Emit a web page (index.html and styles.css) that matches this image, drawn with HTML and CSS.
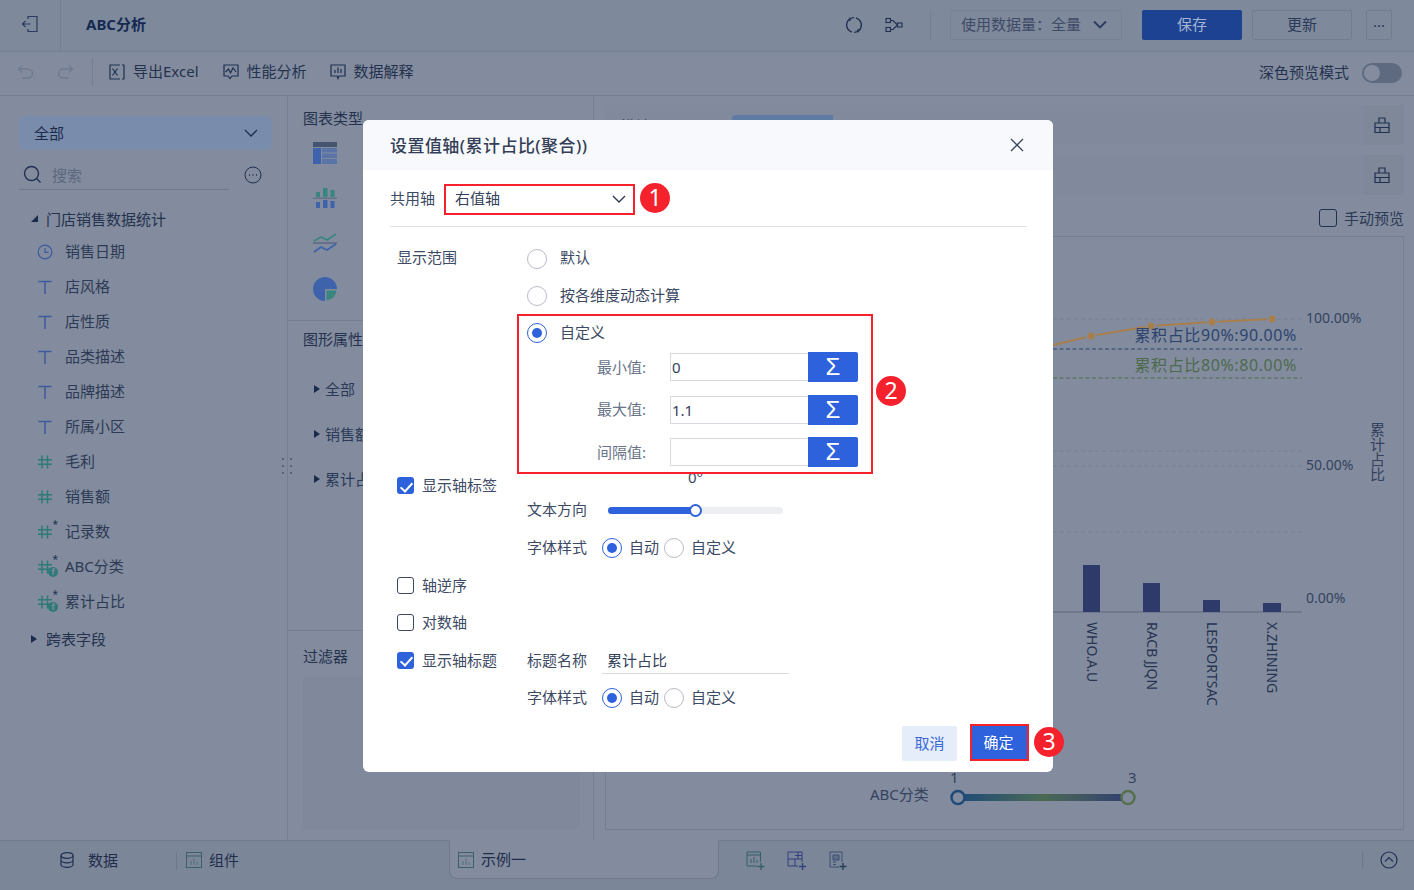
FILE: index.html
```html
<!DOCTYPE html>
<html lang="zh-CN">
<head>
<meta charset="utf-8">
<title>ABC分析</title>
<link rel="stylesheet" href="styles.css">
</head>
<body>
<svg class="sprites" width="0" height="0" aria-hidden="true">
  <symbol id="i-text" viewBox="0 0 16 16"><path d="M1.500 2.500h13M8 2.500V15" fill="none" stroke="#3d5a9e" stroke-width="1.500"/></symbol>
  <symbol id="i-num" viewBox="0 0 16 16"><path d="M5 1.500v13M10.500 1.500v13M1 5.800h14M1 10.200h14" fill="none" stroke="#2f7a78" stroke-width="1.500"/></symbol>
  <symbol id="i-lock" viewBox="0 0 16 16"><path d="M1 15.500V6h14v9.500zM5 6V1h6v5M1 10.500h14M6 10.500v5" fill="none" stroke="#1f3050" stroke-width="1.200"/></symbol>
  <symbol id="i-sheet" viewBox="0 0 16 16"><g fill="none" stroke="#3c5f6a"><rect x=".5" y=".5" width="15" height="15"/><path d="M1 4h14"/><path d="M5 13V9M8 13V6.500M11 13v-3" stroke="#4d6f7d"/></g></symbol>
</svg>
<div class="app">
  <header class="topbar">
    <div class="back">
      <svg width="18" height="18" viewBox="0 0 18 18" fill="none" stroke="#2a3b5e" stroke-width="1.2"><path d="M7 4V1.500h9v15H7V14M1.500 9h8M4.500 6l-3 3 3 3"/></svg>
    </div>
    <div class="doc-title">ABC分析</div>
    <div class="top-actions">
      <svg class="ico-refresh" width="18" height="18" viewBox="0 0 18 18" fill="none" stroke="#1f3050" stroke-width="1.400"><circle cx="9" cy="9" r="7.400" stroke-dasharray="21 2.250" transform="rotate(-75 9 9)"/><path d="M4.200 1.800l1.900 1.800-2.400 1.300M13.800 16.200l-1.900-1.800 2.400-1.300" stroke-width="1"/></svg>
      <svg class="ico-flow" width="18" height="16" viewBox="0 0 18 16" fill="none" stroke="#1f3050" stroke-width="1.100"><rect x="1" y="1.500" width="4.500" height="4"/><rect x="1" y="10.500" width="4.500" height="4"/><rect x="12.500" y="6" width="4.500" height="4"/><path d="M5.500 3.500h2.500L12.500 8 8 12.500H5.500"/></svg>
      <span class="vsep"></span>
      <div class="data-select"><span>使用数据量：全量</span>
        <svg width="16" height="10" viewBox="0 0 16 10" fill="none" stroke="#2a3b5e" stroke-width="1.800"><path d="M2 1.500l6 6 6-6"/></svg>
      </div>
      <button class="btn-save">保存</button>
      <button class="btn-update">更新</button>
      <button class="btn-more">···</button>
    </div>
  </header>

  <div class="toolbar">
    <svg class="undo" width="18" height="16" viewBox="0 0 18 16" fill="none" stroke="#6f7b91" stroke-width="1.400"><path d="M5 1.500L1.500 5 5 8.500M1.500 5H11a4.500 4.500 0 0 1 0 9H5"/></svg>
    <svg class="redo" width="18" height="16" viewBox="0 0 18 16" fill="none" stroke="#6f7b91" stroke-width="1.400"><path d="M13 1.500L16.500 5 13 8.500M16.500 5H7a4.500 4.500 0 0 0 0 9h6"/></svg>
    <span class="vsep tool-sep"></span>
    <div class="tool">
      <svg width="16" height="16" viewBox="0 0 16 16" fill="none" stroke="#1f3050" stroke-width="1.200"><path d="M11 1H1v14h10M13 1h2v14h-2"/><path d="M3.500 4.500l5 7M8.500 4.500l-5 7"/></svg>
      <span>导出Excel</span>
    </div>
    <div class="tool">
      <svg width="16" height="16" viewBox="0 0 16 16" fill="none" stroke="#1f3050" stroke-width="1.200"><path d="M1 1h14v11H9l-2 2.500L5 12H1z"/><path d="M2.500 8l3-3 2 4 2.500-5 3 4"/></svg>
      <span>性能分析</span>
    </div>
    <div class="tool">
      <svg width="16" height="16" viewBox="0 0 16 16" fill="none" stroke="#1f3050" stroke-width="1.200"><path d="M1 1h14v11H9l-1 2.500L7 12H1z"/><path d="M5 6v3M8 3.500V9M11 5v4"/></svg>
      <span>数据解释</span>
    </div>
    <div class="dark-mode"><span>深色预览模式</span><span class="switch"><i></i></span></div>
  </div>

  <main class="workspace">
    <aside class="fields">
      <div class="scope"><span>全部</span>
        <svg width="14" height="8" viewBox="0 0 14 8" fill="none" stroke="#1f3050" stroke-width="1.300"><path d="M1 1l6 6 6-6"/></svg>
      </div>
      <div class="search-row">
        <div class="search">
          <svg width="19" height="19" viewBox="0 0 19 19" fill="none" stroke="#1f3050" stroke-width="1.400"><circle cx="8.500" cy="8.500" r="7"/><path d="M13.500 13.500l4 4"/></svg>
          <span>搜索</span>
        </div>
        <svg class="more-ico" width="18" height="18" viewBox="0 0 18 18" fill="none" stroke="#1f3050" stroke-width="1"><circle cx="9" cy="9" r="8"/><path d="M5 9h1M8.500 9h1M12 9h1" stroke-width="1.400"/></svg>
      </div>
      <div class="tree-head"><i class="tri-open"></i><span>门店销售数据统计</span></div>
      <ul class="field-list">
        <li><span class="f-ico"><svg width="16" height="16" viewBox="0 0 16 16" fill="none" stroke="#3d5a9e" stroke-width="1.200"><circle cx="8" cy="8" r="6.800"/><path d="M8 4v4.300h3.500"/></svg></span><span>销售日期</span></li>
        <li><span class="f-ico"><svg width="16" height="16"><use href="#i-text"/></svg></span><span>店风格</span></li>
        <li><span class="f-ico"><svg width="16" height="16"><use href="#i-text"/></svg></span><span>店性质</span></li>
        <li><span class="f-ico"><svg width="16" height="16"><use href="#i-text"/></svg></span><span>品类描述</span></li>
        <li><span class="f-ico"><svg width="16" height="16"><use href="#i-text"/></svg></span><span>品牌描述</span></li>
        <li><span class="f-ico"><svg width="16" height="16"><use href="#i-text"/></svg></span><span>所属小区</span></li>
        <li><span class="f-ico"><svg width="16" height="16"><use href="#i-num"/></svg></span><span>毛利</span></li>
        <li><span class="f-ico"><svg width="16" height="16"><use href="#i-num"/></svg></span><span>销售额</span></li>
        <li><span class="f-ico"><svg width="16" height="16"><use href="#i-num"/></svg><sup>*</sup></span><span>记录数</span></li>
        <li><span class="f-ico"><svg width="16" height="16"><use href="#i-num"/></svg><sup>*</sup><b>f</b></span><span>ABC分类</span></li>
        <li><span class="f-ico"><svg width="16" height="16"><use href="#i-num"/></svg><sup>*</sup><b>f</b></span><span>累计占比</span></li>
      </ul>
      <div class="tree-head"><i class="tri-closed"></i><span>跨表字段</span></div>
    </aside>

    <section class="props">
      <div class="chart-types">
        <h3>图表类型</h3>
        <div class="type-icons">
          <svg width="24" height="22" viewBox="0 0 24 22"><rect width="24" height="5" fill="#46556f"/><rect y="6" width="8" height="16" fill="#3f62ad"/><path d="M9 6h15v4.500H9zM9 11.500h15V16H9zM9 17h15v5H9z" fill="#5a74a8"/></svg>
          <svg width="24" height="22" viewBox="0 0 24 22"><path d="M3 5h4v5H3zM10 1h4.500v9H10zM17.500 3h4v7h-4z" fill="#39857f"/><rect y="10.500" width="24" height="1.500" fill="#64718a"/><path d="M3 15h4v6H3zM10 13h4.500v8H10zM17.500 14h4v7h-4z" fill="#3f62ad"/></svg>
          <svg width="24" height="22" viewBox="0 0 24 22" fill="none" stroke-width="1.800"><path d="M1 9l7-4 6 3 9-6" stroke="#39857f"/><rect y="10" width="24" height="2" fill="#64718a" stroke="none"/><path d="M1 20l7-5 6 3 9-6" stroke="#3f62ad"/></svg>
          <svg width="24" height="24" viewBox="0 0 24 24"><path d="M24 12A12 12 0 1 0 12 24V12z" fill="#3f62ad"/><path d="M13.500 13.500H23.500A11 11 0 0 1 13.500 23.500z" fill="#39857f"/></svg>
        </div>
      </div>
      <div class="graph-attrs">
        <h3>图形属性</h3>
        <div class="acc"><i class="tri-closed"></i>全部</div>
        <div class="acc"><i class="tri-closed"></i>销售额</div>
        <div class="acc"><i class="tri-closed"></i>累计占比</div>
        <span class="grip"><i></i><i></i><i></i><i></i><i></i><i></i></span>
      </div>
      <div class="filter">
        <h3>过滤器</h3>
        <div class="filter-box"></div>
      </div>
    </section>

    <section class="canvas">
      <div class="shelf">
        <span class="shelf-name">横轴</span>
        <span class="shelf-pill">累计占比</span>
        <span class="shelf-side"><svg width="16" height="16"><use href="#i-lock"/></svg></span>
      </div>
      <div class="shelf">
        <span class="shelf-side"><svg width="16" height="16"><use href="#i-lock"/></svg></span>
      </div>
      <div class="preview-row"><span class="check-box dark"></span><span>手动预览</span></div>
      <div class="chart-frame">
        <svg class="chart" viewBox="606 237 797 592" width="797" height="592">
          <defs>
            <linearGradient id="legend-grad"><stop offset="0" stop-color="#1f4a78"/><stop offset=".5" stop-color="#4a6a55"/><stop offset="1" stop-color="#333f70"/></linearGradient>
          </defs>
          <g stroke="#748096" stroke-dasharray="4 3" fill="none">
            <path d="M1053 319H1302M1053 451H1302M1053 466H1302M1053 532H1302"/>
          </g>
          <path d="M1053 345L1091 336L1151 326L1212 322L1272 319" fill="none" stroke="#a87f4c" stroke-width="2"/>
          <g fill="#a87f4c" stroke="#828c9e" stroke-width="2"><circle cx="1091" cy="336" r="4.500"/><circle cx="1151" cy="326" r="4.500"/><circle cx="1212" cy="322" r="4.500"/><circle cx="1272" cy="319" r="4.500"/></g>
          <path d="M1053 349H1302" stroke="#2d4470" stroke-dasharray="4 2.500" stroke-width="1.200"/>
          <path d="M1053 378H1302" stroke="#4e6a4e" stroke-dasharray="4 2.500" stroke-width="1.200"/>
          <text class="mark-line navy" x="1297" y="341" text-anchor="end">累积占比90%:90.00%</text>
          <text class="mark-line green" x="1297" y="371" text-anchor="end">累积占比80%:80.00%</text>
          <text class="axis-val" x="1306" y="323">100.00%</text>
          <text class="axis-val" x="1306" y="470">50.00%</text>
          <text class="axis-val" x="1306" y="603">0.00%</text>
          <path d="M1053 612H1302" stroke="#69748a" stroke-width="1.500"/>
          <g fill="#2e3a6a"><rect x="1083" y="565" width="17" height="47"/><rect x="1143" y="583" width="17" height="29"/><rect x="1203" y="600" width="17" height="12"/><rect x="1263" y="603" width="18" height="9"/></g>
          <g class="cat">
            <text transform="translate(1087 622) rotate(90)">WHO.A.U</text>
            <text transform="translate(1147 622) rotate(90)">RACB JJQN</text>
            <text transform="translate(1207 622) rotate(90)">LESPORTSAC</text>
            <text transform="translate(1267 622) rotate(90)">X.ZHINING</text>
          </g>
          <text class="axis-title" x="1377" y="422">累计占比</text>
          <text class="legend" x="870" y="800">ABC分类</text>
          <text class="legend" x="950" y="783">1</text>
          <text class="legend" x="1128" y="783">3</text>
          <rect x="958" y="794" width="170" height="7" fill="url(#legend-grad)"/>
          <circle cx="958" cy="797.500" r="6.500" fill="#818b9d" stroke="#1f4a78" stroke-width="2.500"/>
          <circle cx="1128" cy="797.500" r="6.500" fill="#818b9d" stroke="#56704f" stroke-width="2.500"/>
        </svg>
      </div>
    </section>
  </main>

  <footer class="bottombar">
    <div class="tab-data">
      <svg width="14" height="16" viewBox="0 0 14 16" fill="none" stroke="#1f3050" stroke-width="1.200"><ellipse cx="7" cy="3.500" rx="6" ry="2.800"/><path d="M1 3.500v9c0 1.500 2.700 2.800 6 2.800s6-1.300 6-2.800v-9M1 8c0 1.500 2.700 2.800 6 2.800S13 9.500 13 8"/></svg>
      <span>数据</span>
    </div>
    <span class="vsep foot-sep"></span>
    <div class="tab-comp">
      <svg width="16" height="16"><use href="#i-sheet"/></svg>
      <span>组件</span>
    </div>
    <div class="tab-sheet">
      <svg width="16" height="16"><use href="#i-sheet"/></svg>
      <span>示例一</span>
    </div>
    <div class="add-icons">
      <svg width="20" height="20" viewBox="0 0 20 20" fill="none" stroke="#33606a" stroke-width="1"><path d="M14.500 11V1H1v14h10"/><path d="M1 4h13.500M5 12V8M8 12V6M11 12V9"/><path d="M15 12v7M11.500 15.500h7" stroke-width="1.400"/></svg>
      <svg width="20" height="20" viewBox="0 0 20 20" fill="none" stroke="#333f80" stroke-width="1"><path d="M15 11V1H1v14h10M1 8h14M8 8v7M8 4.500h7M11 1v7"/><path d="M15.500 12v7M12 15.500h7" stroke-width="1.400"/></svg>
      <svg width="20" height="20" viewBox="0 0 20 20" fill="none" stroke="#3c4f70" stroke-width="1"><path d="M14 11V1H2v15h9"/><path d="M5 4h6v5H5z" fill="#5e6d88"/><path d="M5 11h3M5 13.500h3"/><path d="M15 12v7M11.500 15.500h7" stroke="#26405a" stroke-width="1.400"/></svg>
    </div>
    <div class="foot-end">
      <span class="vsep"></span>
      <svg width="18" height="18" viewBox="0 0 18 18" fill="none" stroke="#1f3050" stroke-width="1.200"><circle cx="9" cy="9" r="8"/><path d="M5 10.500L9 6.500l4 4"/></svg>
    </div>
  </footer>
</div>

<div class="dialog">
  <div class="dialog-head">
    <span>设置值轴(累计占比(聚合))</span>
    <svg width="14" height="14" viewBox="0 0 14 14" fill="none" stroke="#3a4660" stroke-width="1.300"><path d="M1 1l12 12M13 1L1 13"/></svg>
  </div>
  <div class="dialog-body">
    <div class="share-row">
      <label>共用轴</label>
      <div class="share-select"><span>右值轴</span>
        <svg width="14" height="8" viewBox="0 0 14 8" fill="none" stroke="#2a3652" stroke-width="1.300"><path d="M1 1l6 6 6-6"/></svg>
      </div>
    </div>
    <div class="form-grid">
      <div class="col-label range-label">显示范围</div>
      <div class="col-main">
        <div class="radio-row first"><span class="radio"></span><span>默认</span></div>
        <div class="radio-row"><span class="radio"></span><span>按各维度动态计算</span></div>
        <div class="radio-row"><span class="radio on"></span><span>自定义</span></div>
        <div class="num-rows">
          <div class="num-row"><label>最小值:</label><span class="num-input">0</span><span class="sigma">Σ</span></div>
          <div class="num-row"><label>最大值:</label><span class="num-input">1.1</span><span class="sigma">Σ</span></div>
          <div class="num-row"><label>间隔值:</label><span class="num-input"></span><span class="sigma">Σ</span></div>
        </div>
      </div>

      <div class="col-label check-top"><span class="check-box on"></span><span>显示轴标签</span></div>
      <div class="col-main">
        <div class="angle">0°</div>
        <div class="sub-row"><label>文本方向</label><span class="slider"><i class="fill"></i><i class="knob"></i></span></div>
        <div class="sub-row"><label>字体样式</label>
          <span class="mini-radio"><span class="radio on"></span><span>自动</span></span>
          <span class="mini-radio"><span class="radio"></span><span>自定义</span></span>
        </div>
      </div>

      <div class="col-label check-row"><span class="check-box"></span><span>轴逆序</span></div>
      <div class="col-main"></div>
      <div class="col-label check-row"><span class="check-box"></span><span>对数轴</span></div>
      <div class="col-main"></div>

      <div class="col-label check-title"><span class="check-box on"></span><span>显示轴标题</span></div>
      <div class="col-main">
        <div class="sub-row title-row"><label>标题名称</label><span class="title-input">累计占比</span></div>
        <div class="sub-row"><label>字体样式</label>
          <span class="mini-radio"><span class="radio on"></span><span>自动</span></span>
          <span class="mini-radio"><span class="radio"></span><span>自定义</span></span>
        </div>
      </div>
    </div>
    <div class="dialog-foot">
      <button class="btn-cancel">取消</button>
      <button class="btn-ok">确定</button>
    </div>
  </div>
  <span class="callout-box box-one"></span>
  <span class="callout-box box-two"></span>
  <span class="badge badge-one">1</span>
  <span class="badge badge-two">2</span>
  <span class="badge badge-three">3</span>
</div>
</body>
</html>
```

FILE: styles.css
```css
* { box-sizing: border-box; }
html, body { margin: 0; height: 100%; }
body {
  font-family: "Noto Sans", "Noto Sans CJK SC", sans-serif;
  font-size: 15px;
  color: #2b3a58;
  background: #828c9e;
  overflow: hidden;
}
button { font: inherit; cursor: pointer; }
h3 { margin: 0; font-size: 15px; font-weight: 400; color: #25324e; }
ul { list-style: none; margin: 0; padding: 0; }
.sprites { position: absolute; }
.app { width: 1414px; height: 890px; display: flex; flex-direction: column; }

/* top bar */
.topbar { height: 52px; flex: none; display: flex; align-items: center; padding-bottom: 2px; background: #7f899c; border-bottom: 1px solid #747f92; }
.back { width: 61px; height: 51px; margin-top: 2px; display: flex; align-items: center; justify-content: center; padding-bottom: 3px; border-right: 1px solid #747f92; }
.doc-title { margin-left: 25px; padding-bottom: 2px; font-weight: 700; color: #152a52; }
.top-actions { margin-left: auto; display: flex; align-items: center; height: 100%; }
.ico-flow { margin-left: 22px; }
.top-actions .vsep { margin: 0 19px 0 27px; height: 30px; }
.vsep { display: inline-block; width: 1px; background: #747f92; }
.data-select { width: 172px; height: 30px; border: 1px solid #778296; display: flex; align-items: center; justify-content: space-between; padding: 0 13px 0 10px; color: #3e4b66; }
.data-select span { padding-bottom: 2px; }
.btn-save { margin-left: 20px; width: 100px; height: 30px; padding: 0 0 2px; border: 0; border-radius: 2px; background: #1c4291; color: #a5b4d2; }
.btn-update { margin-left: 10px; width: 100px; height: 30px; padding: 0 0 2px; border: 1px solid #727d91; border-radius: 2px; background: transparent; color: #2b3a58; }
.btn-more { margin: 0 22px 0 14px; width: 26px; height: 30px; padding: 0; border: 1px solid #727d91; border-radius: 2px; background: transparent; color: #2b3a58; }

/* tool bar */
.toolbar { height: 44px; flex: none; display: flex; align-items: center; padding: 0 0 4px 17px; background: #828c9e; border-bottom: 1px solid #767f92; color: #25324e; }
.redo { margin-left: 21px; }
.tool-sep { height: 28px; margin: 0 16px 0 18px; }
.tool { display: flex; align-items: center; gap: 8px; margin-right: 24px; }
.tool + .tool { margin-right: 23px; }
.tool span, .dark-mode > span:first-child { padding-bottom: 2px; }
.dark-mode { margin: 2px 12px 0 auto; display: flex; align-items: center; gap: 13px; }
.switch { width: 40px; height: 20px; border-radius: 10px; background: #5e6a80; padding: 2px; display: block; }
.switch i { display: block; width: 16px; height: 16px; border-radius: 50%; background: #838d9f; }

/* main */
.workspace { flex: 1; display: flex; min-height: 0; }
.fields { width: 288px; flex: none; padding: 20px 15px 0 19px; border-right: 1px solid #757f92; }
.scope { width: 253px; height: 34px; border-radius: 6px; background: #7a8cab; display: flex; align-items: center; justify-content: space-between; padding: 0 14px 0 15px; color: #1c2b49; }
.scope span { padding-bottom: 2px; }
.search-row { display: flex; align-items: center; margin-top: 10px; }
.search { width: 210px; height: 30px; display: flex; align-items: center; gap: 10px; padding-left: 4px; border-bottom: 1px solid #6e7a90; color: #5c687f; }
.more-ico { margin-left: 15px; }
.tree-head { margin-top: 12px; height: 33px; display: flex; align-items: center; padding-left: 12px; color: #25324e; }
.field-list { margin-top: -1px; }
.field-list + .tree-head { margin-top: 2px; height: 35px; }
.tri-open { width: 0; height: 0; margin-right: 8px; border-style: solid; border-width: 0 0 7px 7px; border-color: transparent transparent #1a2a4d transparent; }
.tri-closed { width: 0; height: 0; margin-right: 5px; flex: none; border-style: solid; border-width: 4.500px 0 4.500px 6px; border-color: transparent transparent transparent #1a2a4d; }
.tree-head .tri-closed { margin-right: 9px; }
.field-list li { height: 35px; display: flex; align-items: center; padding-left: 18px; color: #2d3a55; }
.field-list li > span:last-child { padding-bottom: 2px; }
.f-ico { position: relative; width: 16px; height: 16px; margin-right: 12px; flex: none; }
.f-ico svg { display: block; }
.f-ico sup { position: absolute; right: -5px; top: -5px; font-size: 10px; line-height: 10px; color: #1d3050; }
.f-ico b { position: absolute; right: -5px; bottom: -2px; width: 10px; height: 10px; border-radius: 50%; background: #2f7a78; color: #828c9e; font-size: 8px; line-height: 10px; text-align: center; }

/* properties */
.props { width: 306px; flex: none; display: flex; flex-direction: column; border-right: 1px solid #757f92; }
.chart-types { height: 225px; padding: 11px 15px 0; border-bottom: 1px solid #757f92; }
.type-icons { display: flex; flex-direction: column; align-items: flex-start; gap: 23px; margin: 14px 0 0 10px; }
.graph-attrs { position: relative; height: 310px; padding: 6px 15px 0; border-bottom: 1px solid #757f92; }
.acc { height: 45px; display: flex; align-items: center; padding-left: 11px; white-space: nowrap; }
.graph-attrs h3 { height: 25px; margin-bottom: 14px; line-height: 25px; }
.grip { position: absolute; left: -6px; top: 137px; width: 12px; display: grid; grid-template-columns: 2px 2px; gap: 5px 6px; }
.grip i { width: 2px; height: 2px; background: #566379; }
.filter { flex: 1; padding: 14px 15px 0; }
.filter-box { margin-top: 11px; width: 277px; height: 152px; background: #7f899b; }

/* canvas */
.canvas { flex: 1; min-width: 0; padding: 9px 10px 0 11px; }
.shelf { height: 40px; margin-bottom: 10px; display: flex; align-items: center; background: #808a9c; }
.shelf-name { margin-left: 15px; color: #25324e; }
.shelf-pill { margin-left: 82px; width: 101px; height: 32px; margin-top: 12px; border-radius: 4px 0 0 4px; background: #5f7aa3; text-align: center; line-height: 30px; }
.shelf-side { margin-left: auto; width: 40px; height: 100%; padding-right: 4px; display: flex; align-items: center; justify-content: center; background: #7e8899; }
.shelf-side svg { display: block; }
.preview-row { height: 31px; padding: 0 0 6px; display: flex; align-items: center; justify-content: flex-end; gap: 7px; color: #2d3a55; }
.preview-row span:last-child { padding-bottom: 1px; }
.chart-frame { border: 1px solid #757f92; height: 594px; }
.chart { display: block; }
.mark-line { font-size: 16px; letter-spacing: .6px; }
.navy { fill: #2d4470; }
.green { fill: #4e6a4e; }
.axis-val { font-size: 14px; fill: #35425e; }
.cat text { font-size: 14px; fill: #273552; }
.axis-title { font-size: 15px; fill: #35425e; writing-mode: vertical-rl; text-orientation: upright; }
.legend { font-size: 15px; fill: #35425e; }

/* bottom bar */
.bottombar { height: 50px; flex: none; display: flex; align-items: flex-start; background: #7c8699; border-top: 1px solid #707b8f; }
.tab-data { display: flex; align-items: center; gap: 14px; height: 38px; margin-left: 60px; color: #1f2d4b; }
.tab-data span, .tab-comp span, .tab-sheet span { padding-bottom: 2px; }
.foot-sep { height: 18px; margin: 11px 9px 0 58px; background: #6d788c; }
.tab-comp { display: flex; align-items: center; gap: 7px; height: 38px; color: #1f2d4b; }
.tab-sheet { margin: -1px 0 0 210px; width: 270px; height: 39px; display: flex; align-items: center; gap: 7px; padding-left: 8px; background: #828c9e; border: 1px solid #707b8f; border-top-color: #828c9e; border-radius: 0 0 8px 8px; color: #1f2d4b; }
.add-icons { display: flex; align-items: center; gap: 21px; height: 40px; margin-left: 27px; }
.foot-end { margin-left: auto; margin-right: 16px; display: flex; align-items: center; gap: 17px; height: 38px; }
.foot-end .vsep { height: 18px; background: #6d788c; }

/* dialog */
.dialog { position: absolute; left: 363px; top: 120px; width: 690px; height: 652px; background: #fff; border-radius: 6px; color: #3d4a65; }
.dialog-head { height: 50px; display: flex; align-items: center; justify-content: space-between; padding: 0 29px 0 27px; background: #f8f9fc; border-radius: 6px 6px 0 0; font-size: 17px; font-weight: 500; letter-spacing: .45px; color: #343f57; }
.dialog-head span { padding-bottom: 2px; }
.dialog-body { padding: 14px 26px 0 27px; }
.share-row { height: 43px; display: flex; align-items: flex-start; border-bottom: 1px solid #dfe2e8; }
.share-row label { width: 54px; line-height: 29px; }
.share-select { width: 191px; height: 30px; display: flex; align-items: center; justify-content: space-between; padding: 0 9px 0 11px; color: #35415c; }
.share-select span { padding-bottom: 4px; }
.form-grid { display: grid; grid-template-columns: 130px 500px; margin-top: 13px; padding-left: 7px; }
.col-main { min-height: 0; }
.range-label { line-height: 35px; }
.radio-row { height: 37px; display: flex; align-items: center; gap: 13px; }
.radio-row span:last-child, .col-label span:last-child, .num-row label, .title-row label { padding-bottom: 2px; }
.radio-row.first span:last-child, .mini-radio span:last-child, .sub-row label { padding-bottom: 4px; }
.title-row label { padding-bottom: 2px; }
.radio { display: inline-block; flex: none; position: relative; width: 20px; height: 20px; border: 1px solid #b6bbc5; border-radius: 50%; background: #fff; padding: 0; }
.mini-radio .radio { padding: 0; }
.radio.on { border-color: #2d62dc; }
.radio.on::after { content: ""; position: absolute; left: 4px; top: 4px; width: 10px; height: 10px; border-radius: 50%; background: #2d62dc; }
.num-rows { display: flex; flex-direction: column; gap: 10.500px; }
.num-row { height: 32px; display: flex; align-items: center; padding-left: 70px; }
.num-row label { width: 73px; color: #6a7488; }
.num-input { width: 138px; height: 28px; padding-left: 1px; border: 1px solid #d8dbe1; border-right: 0; line-height: 27px; color: #35415c; }
.sigma { width: 50px; height: 30px; background: #2d62dc; border-radius: 0 2px 2px 0; color: #fff; font-family: "Liberation Sans", sans-serif; font-size: 24px; line-height: 29px; text-align: center; }
.col-label.check-top, .col-label.check-row, .col-label.check-title { display: flex; align-items: center; gap: 8px; }
.check-top { height: 35px; }
.check-row { height: 37px; }
.check-title { height: 38px; }
.check-box { display: inline-block; flex: none; position: relative; width: 17px; height: 17px; border: 1px solid #3a4660; border-radius: 3px; background: transparent; padding: 0; }
.check-box.dark { width: 18px; height: 18px; border-color: #1f3050; }
.check-box.on { border: 0; background: #2d62dc; }
.check-box.on::after { content: ""; position: absolute; left: 6px; top: 2.500px; width: 5px; height: 10px; border: solid #fff; border-width: 0 2px 2px 0; transform: rotate(42deg); }
.angle { height: 23px; padding-left: 161px; line-height: 18px; color: #3d4a65; }
.sub-row { height: 38px; display: flex; align-items: center; }
.sub-row label { width: 75px; flex: none; }
.slider { position: relative; width: 175px; height: 7px; margin-left: 6px; border-radius: 4px; background: #eceef1; }
.slider .fill { position: absolute; left: 0; top: 0; width: 88px; height: 7px; border-radius: 4px; background: #2d62dc; }
.slider .knob { position: absolute; left: 81px; top: -3px; width: 13px; height: 13px; border: 2px solid #2d62dc; border-radius: 50%; background: #fff; }
.mini-radio { display: inline-flex; align-items: center; gap: 7px; margin-right: 5px; }
.title-input { width: 187px; height: 27px; margin-top: 1px; padding-left: 5px; border-bottom: 1px solid #d8dbe1; line-height: 26px; color: #35415c; }
.dialog-foot { display: flex; justify-content: flex-end; align-items: flex-end; gap: 13px; margin: 7px -2px 0 0; }
.btn-cancel { width: 55px; height: 35px; padding: 0 0 2px; border: 0; border-radius: 2px; background: #e5edfb; color: #3b6ad8; }
.btn-ok { width: 59px; height: 37px; padding: 0 2px 2px 0; border: 2px solid #f5222d; border-radius: 0; background: #2d62dc; color: #fff; }
.callout-box { position: absolute; border: 2px solid #f5222d; pointer-events: none; }
.box-one { left: 81px; top: 64px; width: 191px; height: 31px; }
.box-two { left: 154px; top: 194px; width: 356px; height: 160px; }
.badge { position: absolute; width: 30px; height: 30px; border-radius: 50%; background: #f5222d; color: #fff; font-size: 23px; line-height: 29px; text-align: center; }
.badge-one { left: 277px; top: 63px; }
.badge-two { left: 513px; top: 256px; }
.badge-three { left: 671px; top: 607px; }
```
